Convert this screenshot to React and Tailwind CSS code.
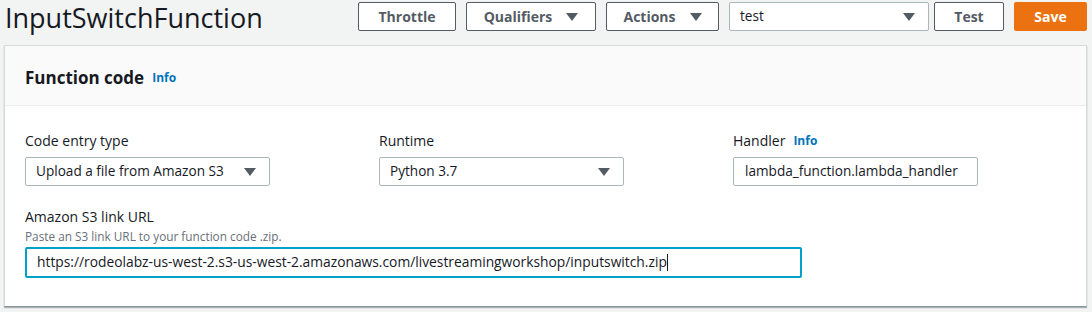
import React from "react";

const font = { fontFamily: '"Open Sans", "Liberation Sans", sans-serif' };

const Caret = () => (
  <svg width="12" height="8" viewBox="0 0 12 8" className="shrink-0">
    <path d="M0 0 L12 0 L6 8 Z" fill="#545b64" />
  </svg>
);

const Button = ({ children, className = "" }) => (
  <button
    className={
      "h-[29px] border border-[#545b64] rounded-[2px] bg-white text-[14px] font-bold text-[#545b64] flex items-center justify-center " +
      className
    }
  >
    {children}
  </button>
);

const Select = ({ value, className = "" }) => (
  <div
    className={
      "h-[29px] border border-[#aab7b8] rounded-[2px] bg-white flex items-center justify-between pl-[10px] pr-[13px] text-[13.6px] text-[#16191f] " +
      className
    }
  >
    <span>{value}</span>
    <Caret />
  </div>
);

const Info = () => (
  <span className="text-[12px] font-bold text-[#0073bb] ml-[8px]">Info</span>
);

export default function App() {
  return (
    <div className="w-[1092px] h-[312px] bg-[#f2f3f3] overflow-hidden" style={font}>
      <div className="h-[45px] flex items-start justify-between pl-[5px] pr-[5px] pt-[2px]">
        <h1 className="text-[27px] leading-[32px] text-[#16191f]">InputSwitchFunction</h1>
        <div className="flex items-center">
          <Button className="w-[98px]">Throttle</Button>
          <Button className="w-[130px] ml-[10px] gap-[14px]">
            Qualifiers <Caret />
          </Button>
          <Button className="w-[113px] ml-[10px] gap-[14px]">
            Actions <Caret />
          </Button>
          <Select value="test" className="w-[200px] ml-[10px]" />
          <Button className="w-[70px] ml-[5px]">Test</Button>
          <button className="w-[73px] h-[29px] ml-[10px] rounded-[2px] bg-[#ec7211] text-white text-[14px] font-bold">
            Save
          </button>
        </div>
      </div>
      <div className="ml-[4px] w-[1083px] h-[262px] bg-white border border-[#d5dbdb] border-b-[#879596] shadow-[0_1px_1px_rgba(0,28,36,0.3)]">
        <div className="h-[60px] bg-[#fafafa] border-b border-[#eaeded] flex items-center pl-[20px] pt-[4px]">
          <span className="text-[17px] font-bold text-[#16191f]">Function code</span>
          <Info />
        </div>
        <div className="pl-[20px] pt-[26px]">
          <div className="flex gap-[109px]">
            <div className="w-[245px]">
              <div className="text-[14px] text-[#16191f] h-[18px] leading-[18px] mb-[7px]">Code entry type</div>
              <Select value="Upload a file from Amazon S3" />
            </div>
            <div className="w-[245px]">
              <div className="text-[14px] text-[#16191f] h-[18px] leading-[18px] mb-[7px]">Runtime</div>
              <Select value="Python 3.7" />
            </div>
            <div className="w-[245px]">
              <div className="text-[14px] text-[#16191f] h-[18px] leading-[18px] mb-[7px] flex items-center">
                Handler <Info />
              </div>
              <div className="h-[29px] border border-[#aab7b8] rounded-[2px] bg-white flex items-center pl-[11px] text-[13.6px] text-[#16191f]">
                lambda_function.lambda_handler
              </div>
            </div>
          </div>
          <div className="mt-[22px] text-[14px] text-[#16191f] h-[18px] leading-[18px]">Amazon S3 link URL</div>
          <div className="mt-[1px] text-[11.8px] text-[#687078] h-[18px] leading-[18px]">Paste an S3 link URL to your function code .zip.</div>
          <div className="mt-[2px] w-[777px] h-[31px] border-2 border-[#00a1c9] rounded-[2px] bg-white flex items-center pl-[10px] text-[13.8px] text-[#16191f]">
            <span>https://rodeolabz-us-west-2.s3-us-west-2.amazonaws.com/livestreamingworkshop/inputswitch.zip</span>
            <span className="w-[1px] h-[17px] bg-[#16191f]" />
          </div>
        </div>
      </div>
    </div>
  );
}
